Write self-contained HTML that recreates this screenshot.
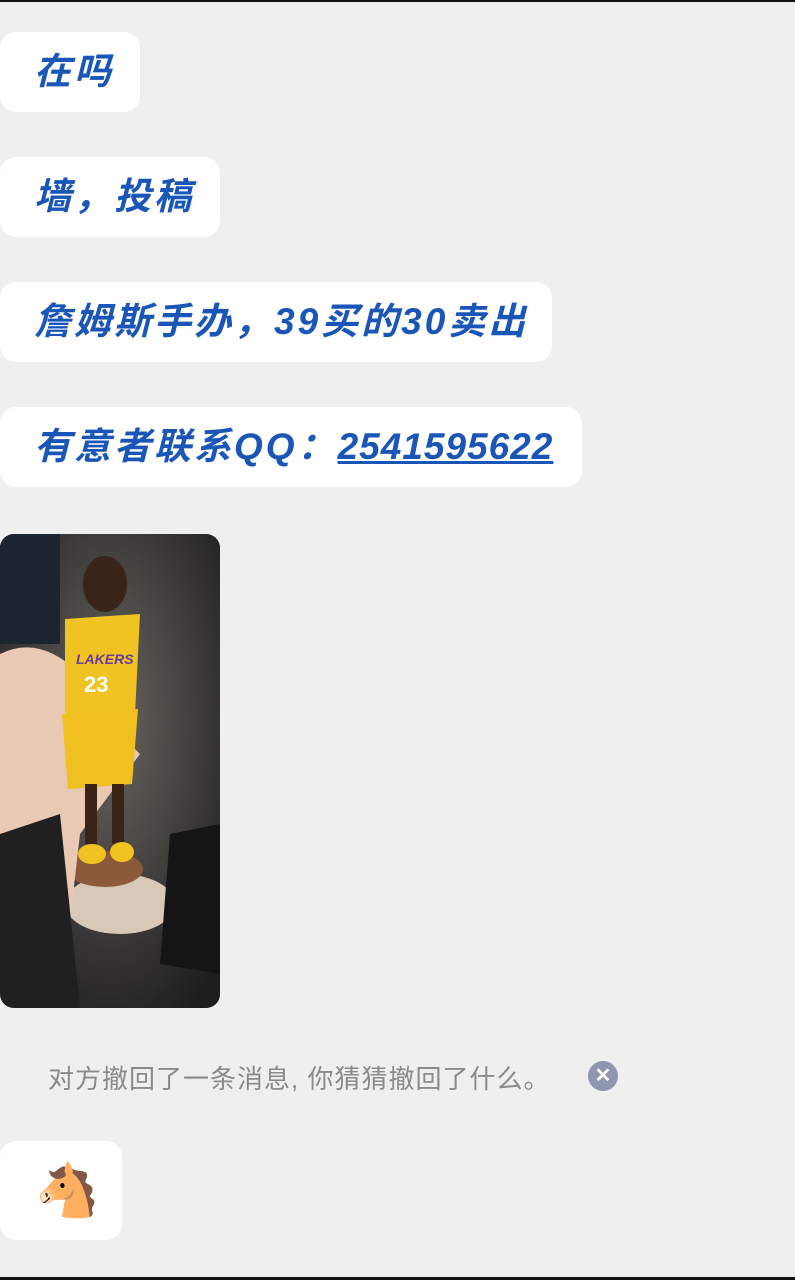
<!DOCTYPE html>
<html><head><meta charset="utf-8"><style>
body{margin:0;width:795px;height:1280px;background:#efefef;position:relative;overflow:hidden;font-family:"Liberation Sans","Noto Sans CJK SC",sans-serif}
.top{position:absolute;left:0;top:0;width:795px;height:2px;background:#111}
.bot{position:absolute;left:0;top:1277px;width:795px;height:3px;background:#111}
.b{position:absolute;left:0;background:#fff;border-radius:16px;height:80px;box-sizing:border-box;padding-left:34px;line-height:80px;font-size:37px;letter-spacing:3px;font-weight:bold;font-style:italic;color:#1a55b8;white-space:nowrap}
.img{position:absolute;left:0;top:534px;width:220px;height:474px;border-radius:14px;overflow:hidden;background:#2a2a2a}
.rec{position:absolute;left:48px;top:1059px;font-size:26px;letter-spacing:1px;color:#8a8a8a;white-space:nowrap}
.x{position:absolute;left:588px;top:1061px;width:30px;height:30px;border-radius:50%;background:#8f96b0;color:#fff;text-align:center;line-height:30px;font-size:20px;font-weight:bold}
.h{position:absolute;left:0;top:1141px;width:122px;height:99px;background:#fff;border-radius:16px}
</style></head><body>
<div class="top"></div>
<div class="b" style="top:32px;width:140px">在吗</div>
<div class="b" style="top:157px;width:220px">墙，投稿</div>
<div class="b" style="top:282px;width:552px">詹姆斯手办，39买的30卖出</div>
<div class="b" style="top:407px;width:582px">有意者联系QQ：<span style="text-decoration:underline;letter-spacing:1px">2541595622</span></div>
<div class="img"><svg width="220" height="474" viewBox="0 0 220 474">
<defs><radialGradient id="g" cx="0.5" cy="0.4" r="0.7"><stop offset="0" stop-color="#6a6660"/><stop offset="1" stop-color="#1e1e1e"/></radialGradient></defs>
<rect width="220" height="474" fill="url(#g)"/>
<rect x="0" y="0" width="60" height="110" fill="#1c2430"/>
<ellipse cx="120" cy="370" rx="55" ry="30" fill="#d8c8b8"/>
<ellipse cx="105" cy="335" rx="38" ry="18" fill="#8a5a3a"/>
<path d="M0 120 Q40 100 80 140 L120 200 L140 220 L80 300 L60 474 L0 474Z" fill="#e9c8b4"/>
<path d="M0 300 L60 280 L80 474 L0 474Z" fill="#202020"/>
<ellipse cx="105" cy="50" rx="22" ry="28" fill="#3a2418"/>
<path d="M65 85 L140 80 L135 180 L65 190Z" fill="#f1c322"/>
<path d="M62 180 L138 175 L132 250 L68 255Z" fill="#f0c020"/>
<rect x="85" y="250" width="12" height="60" fill="#3a2418"/><rect x="112" y="250" width="12" height="60" fill="#3a2418"/>
<ellipse cx="92" cy="320" rx="14" ry="10" fill="#f1c322"/><ellipse cx="122" cy="318" rx="12" ry="10" fill="#f1c322"/>
<text x="76" y="130" font-size="14" fill="#6a3aa0" font-style="italic" font-weight="bold">LAKERS</text>
<text x="84" y="158" font-size="22" fill="#fff" font-weight="bold">23</text>
<path d="M170 300 L220 290 L220 440 L160 430Z" fill="#151515"/>
</svg></div>
<div class="rec">对方撤回了一条消息, 你猜猜撤回了什么。</div>
<div class="x">✕</div>
<div class="h"><div style="position:absolute;left:35px;top:20px;font-size:52px;line-height:60px;font-family:'DejaVu Sans',sans-serif;color:#7a6648">🐴</div></div>
<div class="bot"></div>
</body></html>
